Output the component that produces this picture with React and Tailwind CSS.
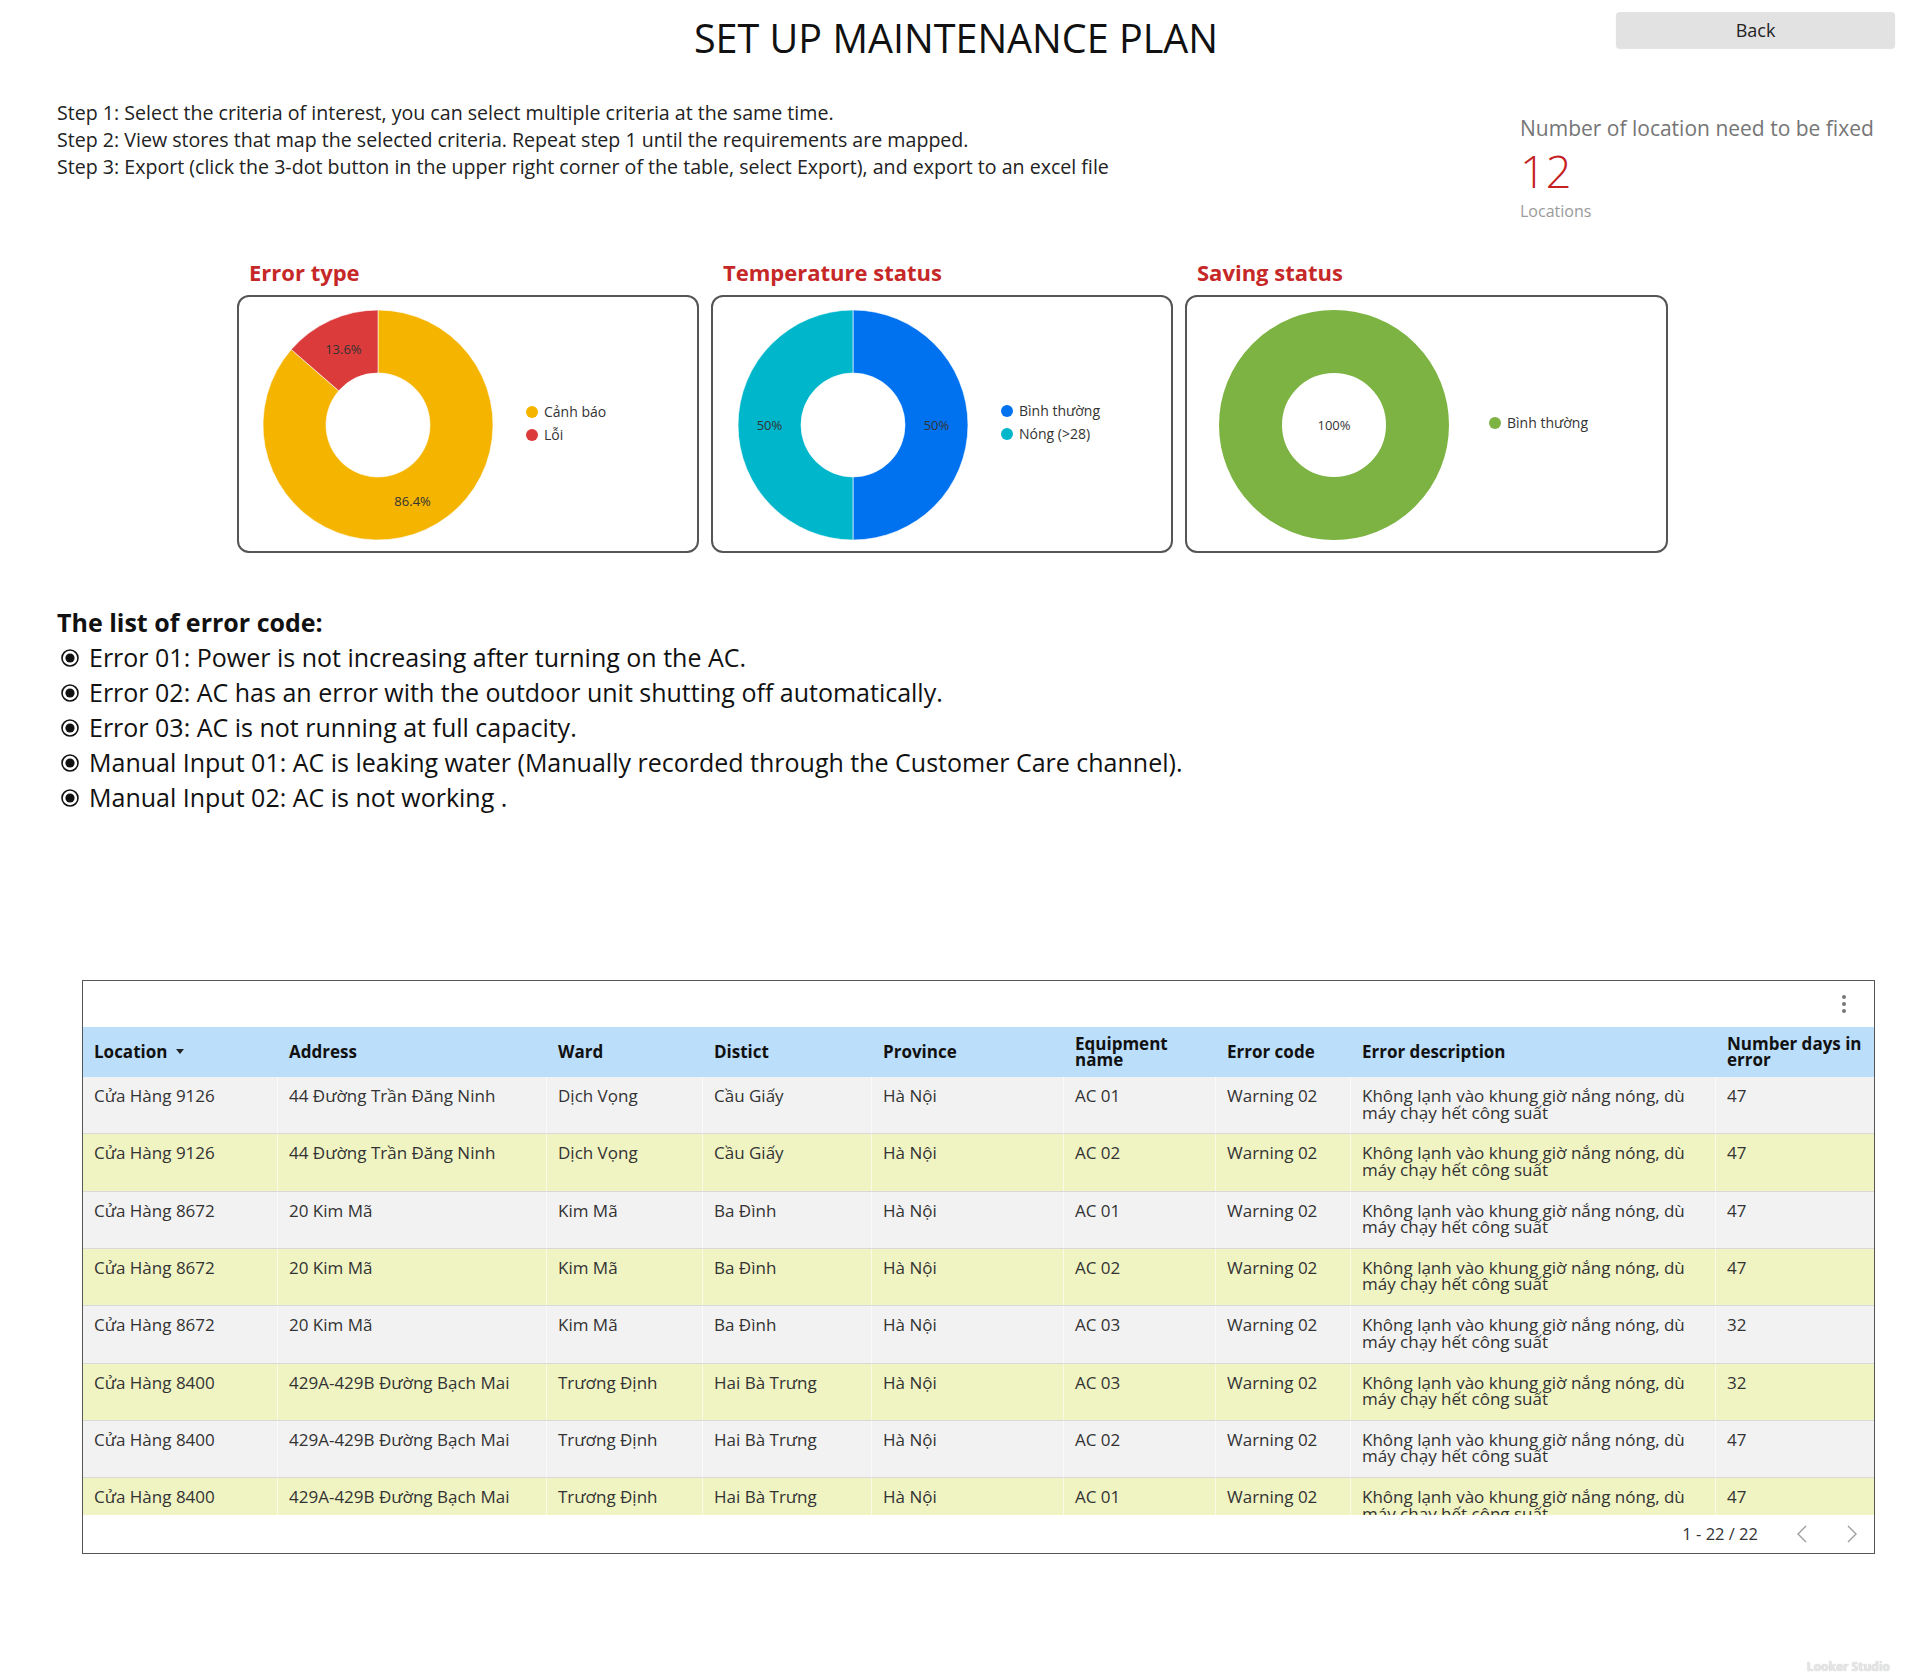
import React from "react";

function pt(cx, cy, rad, deg) {
  const t = (deg * Math.PI) / 180;
  return [cx + rad * Math.sin(t), cy - rad * Math.cos(t)];
}

function segPath(cx, cy, R, r, a0, a1) {
  const large = a1 - a0 > 180 ? 1 : 0;
  const [x0, y0] = pt(cx, cy, R, a0);
  const [x1, y1] = pt(cx, cy, R, a1);
  const [x2, y2] = pt(cx, cy, r, a1);
  const [x3, y3] = pt(cx, cy, r, a0);
  return `M${x0} ${y0} A${R} ${R} 0 ${large} 1 ${x1} ${y1} L${x2} ${y2} A${r} ${r} 0 ${large} 0 ${x3} ${y3} Z`;
}

function Donut({ data }) {
  const R = 115;
  const r = 52;
  const c = 115;
  let acc = 0;
  const total = data.reduce((s, d) => s + d.value, 0);
  return (
    <svg width="230" height="230" viewBox="0 0 230 230" className="shrink-0">
      {data.map((d, i) => {
        const a0 = (acc / total) * 360;
        acc += d.value;
        const a1 = (acc / total) * 360;
        const mid = (a0 + a1) / 2;
        const [lx, ly] = data.length === 1 ? [c, c] : pt(c, c, (R + r) / 2, mid);
        return (
          <g key={i}>
            {data.length === 1 ? (
              <circle cx={c} cy={c} r={(R + r) / 2} fill="none" stroke={d.color} strokeWidth={R - r} />
            ) : (
              <path d={segPath(c, c, R, r, a0, a1)} fill={d.color} stroke="#ffffff" strokeWidth="0.6" />
            )}
            <text
              x={lx}
              y={ly}
              textAnchor="middle"
              dominantBaseline="central"
              fontSize="13"
              fill="#333"
              fontFamily="'Open Sans', sans-serif"
            >
              {d.label}
            </text>
          </g>
        );
      })}
    </svg>
  );
}

function ChartCard({ title, width, padLeft, gap, legendTop, data }) {
  return (
    <div className="flex flex-col" style={{ width }}>
      <div className="pl-[12px] text-[22px] leading-[30px] font-bold text-[#c62828] mb-[8px]">{title}</div>
      <div
        className="h-[258px] border-2 border-[#555555] rounded-[12px] flex items-start pt-[13px]"
        style={{ paddingLeft: padLeft }}
      >
        <Donut data={data} />
        <div className="flex flex-col" style={{ marginLeft: gap, marginTop: legendTop }}>
          {data.map((d, i) => (
            <div key={i} className="flex items-center h-[23px] text-[14px] text-[#333]">
              <span className="w-[12px] h-[12px] rounded-full mr-[6px]" style={{ background: d.color }} />
              <span>{d.name}</span>
            </div>
          ))}
        </div>
      </div>
    </div>
  );
}

const errorItems = [
  "Error 01: Power is not increasing after turning on the AC.",
  "Error 02: AC has an error with the outdoor unit shutting off automatically.",
  "Error 03: AC is not running at full capacity.",
  "Manual Input 01: AC is leaking water (Manually recorded through the Customer Care channel).",
  "Manual Input 02: AC is not working .",
];

const rows = [
  ["Cửa Hàng 9126", "44 Đường Trần Đăng Ninh", "Dịch Vọng", "Cầu Giấy", "Hà Nội", "AC 01", "Warning 02", "47"],
  ["Cửa Hàng 9126", "44 Đường Trần Đăng Ninh", "Dịch Vọng", "Cầu Giấy", "Hà Nội", "AC 02", "Warning 02", "47"],
  ["Cửa Hàng 8672", "20 Kim Mã", "Kim Mã", "Ba Đình", "Hà Nội", "AC 01", "Warning 02", "47"],
  ["Cửa Hàng 8672", "20 Kim Mã", "Kim Mã", "Ba Đình", "Hà Nội", "AC 02", "Warning 02", "47"],
  ["Cửa Hàng 8672", "20 Kim Mã", "Kim Mã", "Ba Đình", "Hà Nội", "AC 03", "Warning 02", "32"],
  ["Cửa Hàng 8400", "429A-429B Đường Bạch Mai", "Trương Định", "Hai Bà Trưng", "Hà Nội", "AC 03", "Warning 02", "32"],
  ["Cửa Hàng 8400", "429A-429B Đường Bạch Mai", "Trương Định", "Hai Bà Trưng", "Hà Nội", "AC 02", "Warning 02", "47"],
  ["Cửa Hàng 8400", "429A-429B Đường Bạch Mai", "Trương Định", "Hai Bà Trưng", "Hà Nội", "AC 01", "Warning 02", "47"],
];

const gridCols = "grid grid-cols-[195px_269px_156px_169px_192px_152px_135px_365px_158px]";

function Bullet() {
  return (
    <svg width="20" height="20" viewBox="0 0 20 20" className="shrink-0 ml-[3px] mr-[9px]">
      <circle cx="10" cy="10" r="8" fill="none" stroke="#111" strokeWidth="1.6" />
      <circle cx="10" cy="10" r="4.6" fill="#111" />
    </svg>
  );
}

export default function App() {
  return (
    <div className="w-[1920px] h-[1680px] bg-white relative overflow-hidden font-['Open_Sans',sans-serif] text-[#222]">
      {/* Header */}
      <div className="grid grid-cols-[1fr_auto_1fr] items-start pt-[12px]">
        <div />
        <h1 className="text-[39.5px] leading-[52px] font-normal text-[#111] mr-[8px]">SET UP MAINTENANCE PLAN</h1>
        <div className="flex justify-end pr-[25px]">
          <button className="w-[279px] h-[36px] bg-[#e2e2e2] rounded-[4px] shadow-[0_1px_1px_rgba(0,0,0,0.12)] text-[18px] text-[#222]">
            Back
          </button>
        </div>
      </div>

      {/* Steps + KPI */}
      <div className="flex h-[157px] mt-[36px]">
        <div className="pl-[57px] text-[19.6px] leading-[26.8px] text-[#222]">
          <p>Step 1: Select the criteria of interest, you can select multiple criteria at the same time.</p>
          <p>Step 2: View stores that map the selected criteria. Repeat step 1 until the requirements are mapped.</p>
          <p>Step 3: Export (click the 3-dot button in the upper right corner of the table, select Export), and export to an excel file</p>
        </div>
        <div className="ml-auto w-[400px] pt-[15px] flex flex-col">
          <div className="text-[21px] leading-[27px] text-[#757575]">Number of location need to be fixed</div>
          <div className="text-[45px] leading-[56px] font-light text-[#c5221f] mt-[1px]">12</div>
          <div className="text-[16px] leading-[22px] text-[#9a9a9a] mt-[1px]">Locations</div>
        </div>
      </div>

      {/* Charts */}
      <div className="flex gap-[12px] pl-[237px]">
        <ChartCard
          title="Error type"
          width={462}
          padLeft={24}
          gap={33}
          legendTop={90}
          data={[
            { name: "Cảnh báo", value: 86.4, label: "86.4%", color: "#f4b400" },
            { name: "Lỗi", value: 13.6, label: "13.6%", color: "#dc3b3b" },
          ]}
        />
        <ChartCard
          title="Temperature status"
          width={462}
          padLeft={25}
          gap={33}
          legendTop={89}
          data={[
            { name: "Bình thường", value: 50, label: "50%", color: "#0072f0" },
            { name: "Nóng (>28)", value: 50, label: "50%", color: "#00b6cb" },
          ]}
        />
        <ChartCard
          title="Saving status"
          width={483}
          padLeft={32}
          gap={40}
          legendTop={101}
          data={[{ name: "Bình thường", value: 100, label: "100%", color: "#7cb342" }]}
        />
      </div>

      {/* Error list */}
      <div className="pl-[57px] mt-[52px] text-[25px] leading-[35px] text-[#111]">
        <div className="font-bold">The list of error code:</div>
        {errorItems.map((t, i) => (
          <div key={i} className="flex items-center">
            <Bullet />
            <span>{t}</span>
          </div>
        ))}
      </div>

      {/* Table */}
      <div className="ml-[82px] mt-[165px] w-[1793px] h-[574px] border border-[#555555] flex flex-col text-[17px]">
        <div className="h-[46px] flex items-center justify-end pr-[28px]">
          <div className="flex flex-col gap-[3px]">
            <span className="w-[4px] h-[4px] rounded-full bg-[#777]" />
            <span className="w-[4px] h-[4px] rounded-full bg-[#777]" />
            <span className="w-[4px] h-[4px] rounded-full bg-[#777]" />
          </div>
        </div>
        <div className={`${gridCols} h-[50px] bg-[#bbdefb] font-bold text-[#111] leading-[16.5px] items-center`}>
          <div className="pl-[11px] flex items-center">
            Location
            <svg width="8" height="6" viewBox="0 0 8 6" className="ml-[9px]">
              <path d="M0 0 L8 0 L4 5 Z" fill="#222" />
            </svg>
          </div>
          <div className="pl-[11px]">Address</div>
          <div className="pl-[11px]">Ward</div>
          <div className="pl-[11px]">Distict</div>
          <div className="pl-[11px]">Province</div>
          <div className="pl-[11px]">
            Equipment
            <br />
            name
          </div>
          <div className="pl-[11px]">Error code</div>
          <div className="pl-[11px]">Error description</div>
          <div className="pl-[11px]">
            Number days in
            <br />
            error
          </div>
        </div>
        <div className="h-[438px] overflow-hidden">
          {rows.map((r, i) => (
            <div
              key={i}
              className={`${gridCols} h-[57.33px] border-b border-[#d9d9d9] text-[#333] leading-[16.5px] ${
                i % 2 === 0 ? "bg-[#f2f2f2]" : "bg-[#f0f4c3]"
              }`}
            >
              {r.slice(0, 7).map((c, j) => (
                <div key={j} className="pl-[11px] pt-[11px] border-r border-white/60">
                  {c}
                </div>
              ))}
              <div className="pl-[11px] pt-[11px] border-r border-white/60">
                <div>Không lạnh vào khung giờ nắng nóng, dù</div>
                <div>máy chạy hết công suất</div>
              </div>
              <div className="pl-[11px] pt-[11px]">{r[7]}</div>
            </div>
          ))}
        </div>
        <div className="h-[38px] flex items-center justify-end pr-[16px] text-[#333] text-[16.5px]">
          <span>1 - 22 / 22</span>
          <svg width="12" height="18" viewBox="0 0 12 18" className="ml-[38px]">
            <path d="M10 1 L2 9 L10 17" fill="none" stroke="#9e9e9e" strokeWidth="1.4" />
          </svg>
          <svg width="12" height="18" viewBox="0 0 12 18" className="ml-[38px]">
            <path d="M2 1 L10 9 L2 17" fill="none" stroke="#9e9e9e" strokeWidth="1.4" />
          </svg>
        </div>
      </div>

      <div className="absolute right-[30px] bottom-[4px] text-[12px] font-bold text-[#e6e6e6] [text-shadow:0_0_1px_#bdbdbd]">
        Looker Studio
      </div>
    </div>
  );
}
